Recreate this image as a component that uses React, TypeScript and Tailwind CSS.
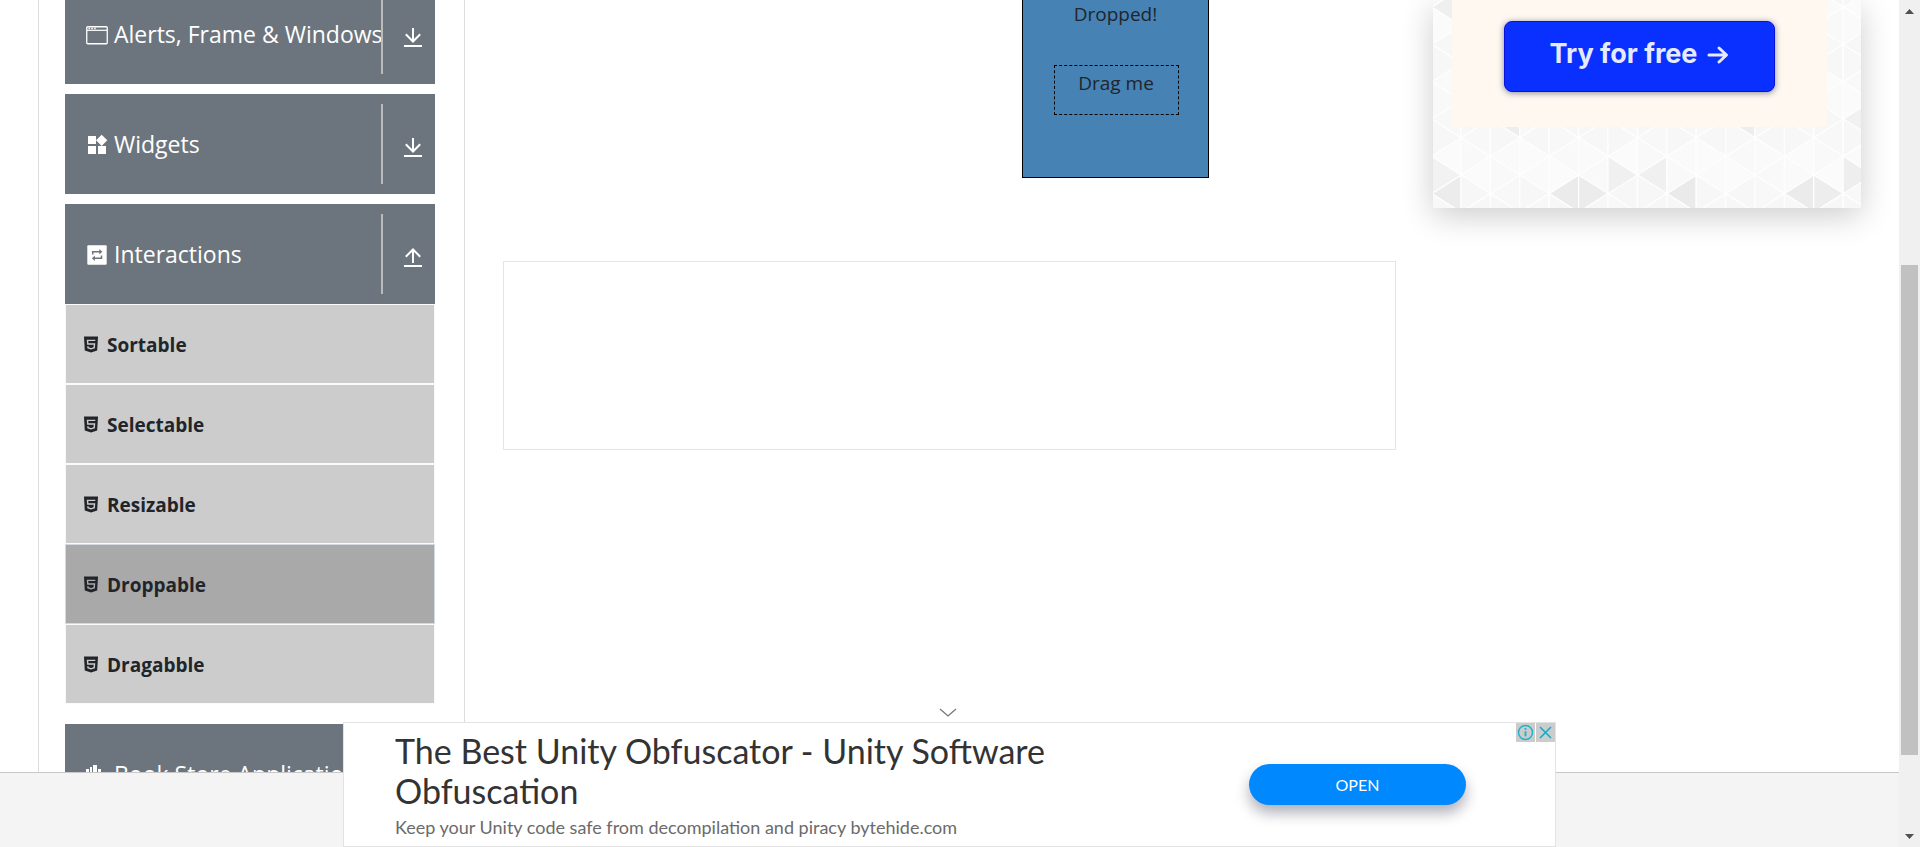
import type { ReactNode } from "react";
import { MdWidgets } from "react-icons/md";

const COL = 29.4;
const ROW = 37.3;

const SHADED: Record<string, string> = {
  "-1L193": "#ececec",
  "3L193": "#ebebeb",
  "4R193": "#ececec",
  "7L193": "#eaeaea",
  "11L193": "#ebebeb",
  "12R193": "#ededed",
  "-1R175": "#f2f2f2",
  "5R175": "#f0f0f0",
  "6L175": "#f0f0f0",
  "13R175": "#eeeeee",
  "1L119": "#eeeeee",
  "9L119": "#eeeeee",
  "13L119": "#f1f1f1",
  "-1L7": "#efefef",
};

const LIGHT = ["#f8f8f8", "#fafafa", "#f7f7f7", "#f9f9f9", "#f7f7f7", "#fbfbfb"];

const level = (y: number) => Math.floor(y + 0.2);

function TrianglePattern() {
  const shapes: ReactNode[] = [];
  for (let k = -1; k < 14; k++) {
    const x0 = 28 + COL * k;
    const x1 = x0 + COL;
    for (let m = -4; m < 3; m++) {
      const even = 137.7 + ROW * m;
      const odd = 156.3 + ROW * m;
      const isEven = k % 2 === 0;
      const left = isEven ? even : odd;
      const right = isEven ? odd : even;
      const h = ROW / 2;
      const seed = Math.abs(k * 7 + m * 5 + 60);
      const lKey = `${k}L${level(left)}`;
      const rKey = `${k}R${level(right)}`;
      shapes.push(
        <path
          key={lKey}
          d={`M${x0} ${left}L${x1} ${left - h}V${left + h}Z`}
          fill={SHADED[lKey] ?? LIGHT[seed % 6]}
        />,
        <path
          key={rKey}
          d={`M${x1} ${right}L${x0} ${right - h}V${right + h}Z`}
          fill={SHADED[rKey] ?? LIGHT[(seed + 3) % 6]}
        />,
      );
    }
  }
  return (
    <svg
      aria-hidden="true"
      viewBox="0 0 428 208"
      preserveAspectRatio="xMinYMin slice"
      className="absolute inset-0 h-full w-full"
    >
      <g stroke="#fefefe" strokeWidth="1.2">
        {shapes}
      </g>
    </svg>
  );
}

function ArrowIcon({ up = false }: { up?: boolean }) {
  return (
    <svg width="18" height="20" viewBox="0 0 18 20" fill="none" stroke="currentColor" strokeWidth="2" aria-hidden="true">
      {up ? <path d="M9 15V1.5M1.8 8.7L9 1.5l7.2 7.2" /> : <path d="M9 0v13.5M1.8 6.3L9 13.5l7.2-7.2" />}
      <path d="M0 18h18" />
    </svg>
  );
}

function WindowIcon() {
  return (
    <svg width="22" height="22" viewBox="0 0 22 22" fill="none" stroke="currentColor" aria-hidden="true">
      <rect x="0.75" y="2.75" width="20.5" height="17" rx="1" strokeWidth="1.3" />
      <path d="M1 6.3h20" strokeWidth="1.2" />
      <path d="M2.5 4.5h1.6M5.3 4.5h1.6M8.1 4.5h1.6" strokeWidth="1.5" />
    </svg>
  );
}

function SwapIcon() {
  return (
    <svg width="22" height="22" viewBox="0 0 22 22" aria-hidden="true">
      <rect x="1.3" y="1.3" width="19.400" height="19.400" rx="1" fill="#fff" />
      <g fill="none" stroke="#6c757d" strokeWidth="1.5">
        <path d="M6.700 10.500V7.700h7.800M15.500 11.500v2.800H7.700" />
      </g>
      <path d="M13.300 5l3 2.700-3 2.700ZM8.900 11.600l-3 2.700 3 2.700Z" fill="#6c757d" />
    </svg>
  );
}

function BarsIcon() {
  return (
    <svg width="22" height="22" viewBox="0 0 22 22" fill="currentColor" aria-hidden="true">
      <path d="M0 5h3v16H0zM4 3h2v18H4zM7 1h4v20H7zM12 5h3v16h-3z" />
    </svg>
  );
}

function Html5Icon({ cutout }: { cutout: string }) {
  return (
    <svg width="14" height="17" viewBox="0 0 14 17" className="shrink-0" aria-hidden="true">
      <path d="M0 .4h14l-.8 14L7 16.400.8 14.400Z" fill="#212529" />
      <path
        d="M11.300 4.400H3.500l.3 3.600h6.700l-.3 3.700L7 12.800l-3-1.100-.1-1.400"
        fill="none"
        stroke={cutout}
        strokeWidth="1.400"
      />
    </svg>
  );
}

function GroupHeader({ icon, label, open = false }: { icon: ReactNode; label: string; open?: boolean }) {
  return (
    <button
      type="button"
      aria-expanded={open}
      className="flex h-[100px] w-full items-stretch bg-[#6c757d] py-2.5 text-left text-white"
    >
      <span className="flex flex-1 items-center whitespace-nowrap pl-[21px] text-[23px] leading-8">
        <span className="mt-0.5 flex w-[22px] shrink-0 justify-center">{icon}</span>
        <span className="ml-1.5 w-0">{label}</span>
      </span>
      <span className="flex w-[54px] items-center justify-center border-l-2 border-[#bbb] pl-2 pt-2">
        <ArrowIcon up={open} />
      </span>
    </button>
  );
}

const ITEMS = ["Sortable", "Selectable", "Resizable", "Droppable", "Dragabble"];

function Sidebar() {
  return (
    <nav className="flex w-[427px] shrink-0 flex-col border-x border-[#dcdcdc] pl-[26px] pr-[29px]">
      <div className="-mt-4 flex flex-col gap-2.5">
        <GroupHeader icon={<WindowIcon />} label="Alerts, Frame & Windows" />
        <GroupHeader icon={<MdWidgets size={24} className="shrink-0" />} label="Widgets" />
        <GroupHeader icon={<SwapIcon />} label="Interactions" open />
      </div>
      <ul>
        {ITEMS.map((item) => {
          const active = item === "Droppable";
          return (
            <li key={item}>
              <a
                href={`#${item.toLowerCase()}`}
                className={
                  active
                    ? "flex h-20 items-center gap-[9px] border border-[#d3d9df] bg-[#a9a9a9] pl-[18px] text-[19px] font-bold text-[#212529]"
                    : "flex h-20 items-center gap-[9px] border border-[#f8f9fa] bg-[#ccc] pl-[18px] text-[19px] font-bold text-[#212529]"
                }
              >
                <Html5Icon cutout={active ? "#a9a9a9" : "#cccccc"} />
                <span className="pt-0.5">{item}</span>
              </a>
            </li>
          );
        })}
      </ul>
      <div className="mt-5">
        <GroupHeader icon={<BarsIcon />} label="Book Store Application" />
      </div>
    </nav>
  );
}

function DropArea() {
  return (
    <section className="ml-[38px] mr-[37px] min-w-0 flex-1">
      <div className="-mt-px ml-[519px] flex h-[179px] w-[187px] flex-col items-center border border-t-0 border-black bg-[#4682b4] text-[19px] leading-[30px] text-[#212529]">
        <p>Dropped!</p>
        <div className="ml-px mt-9 h-[50px] w-[125px] border border-dashed border-black pt-0.5 text-center">Drag me</div>
      </div>
      <div className="mt-[83px] h-[189px] border border-[#e5e5e5]" />
    </section>
  );
}

function SideAd() {
  return (
    <aside className="relative h-[208px] w-[428px] shrink-0 bg-[#fafafa] shadow-[0_8px_30px_rgba(0,0,0,0.2)]">
      <TrianglePattern />
      <div className="relative ml-[19px] mr-[34px] flex h-[127px] justify-center bg-[#fef8f1] pt-[21px]">
        <button
          type="button"
          className="flex h-[71px] w-[271px] items-center justify-center gap-2.5 rounded-lg border border-[#0a12d8] bg-[#0a30ff] pb-1 font-['Inter',sans-serif] text-[27px] font-bold text-[#e6eaff] shadow-[0_1px_6px_rgba(60,60,90,0.6)]"
        >
          Try for free
          <svg width="22" height="20" viewBox="0 0 22 20" fill="none" stroke="currentColor" strokeWidth="3" strokeLinejoin="round" strokeLinecap="round" aria-hidden="true">
            <path d="M2 10h17M12 3l7.500 7-7.500 7" />
          </svg>
        </button>
      </div>
    </aside>
  );
}

function BottomAd() {
  return (
    <aside className="fixed bottom-0 left-[343px] right-[364px] h-[125px] border border-[#e3e3e3] bg-white">
      <button type="button" aria-label="Collapse" className="absolute -top-[15px] left-[595px]">
        <svg width="18" height="10" viewBox="0 0 18 10" fill="none" stroke="#777" strokeWidth="1.3" aria-hidden="true">
          <path d="M1 1l8 7 8-7" />
        </svg>
      </button>
      <div className="flex h-full items-start">
        <div className="ml-[51px] mt-2 w-[720px] font-['Lato',sans-serif]">
          <h2 className="text-[34px] leading-10 text-[#333]">The Best Unity Obfuscator - Unity Software Obfuscation</h2>
          <p className="text-[18px] leading-8 text-[#6b6b6b]">
            Keep your Unity code safe from decompilation and piracy bytehide.com
          </p>
        </div>
        <a
          href="#open"
          className="ml-auto mr-[89px] mt-[41px] flex h-[41px] w-[217px] items-center justify-center rounded-full bg-[#0088ff] font-['Lato',sans-serif] text-base text-white shadow-[0_8px_14px_rgba(30,30,60,0.35)]"
        >
          OPEN
        </a>
      </div>
      <div className="absolute right-0 top-0 flex gap-px">
        <button type="button" aria-label="Ad information" className="flex h-[19px] w-[19px] items-center justify-center bg-[#ccc]">
          <svg width="17" height="17" viewBox="0 0 17 17" fill="none" stroke="#1fb3cc" strokeWidth="1.5" aria-hidden="true">
            <circle cx="8.500" cy="8.500" r="7" />
            <path d="M8.500 7.300v5M8.500 4v1.800" strokeWidth="1.900" />
          </svg>
        </button>
        <button type="button" aria-label="Close ad" className="flex h-[19px] w-[19px] items-center justify-center bg-[#ccc]">
          <svg width="13" height="13" viewBox="0 0 13 13" fill="none" stroke="#12acc8" strokeWidth="1.600" aria-hidden="true">
            <path d="M1 1l11 11M12 1L1 12" />
          </svg>
        </button>
      </div>
    </aside>
  );
}

function ScrollTrack() {
  return (
    <div aria-hidden="true" className="flex w-[21px] shrink-0 flex-col items-center bg-[#f0f0f0] py-2">
      <svg width="9" height="5" viewBox="0 0 9 5" className="mt-px" fill="#505050">
        <path d="M4.500 0L9 5H0Z" />
      </svg>
      <div className="mt-[251px] w-[17px] flex-1 bg-[#c1c1c1]" />
      <svg width="9" height="5" viewBox="0 0 9 5" className="mt-[79px]" fill="#505050">
        <path d="M4.500 5L9 0H0Z" />
      </svg>
    </div>
  );
}

export default function App() {
  return (
    <div className="flex h-screen bg-white font-['Open_Sans','Noto_Sans',sans-serif]">
      <div className="flex min-w-0 flex-1 flex-col">
        <main className="flex min-h-0 flex-1 overflow-hidden px-[38px]">
          <Sidebar />
          <DropArea />
          <SideAd />
        </main>
        <footer className="h-[75px] shrink-0 border-t border-[#c8c8c8] bg-[#f4f4f4]" />
      </div>
      <ScrollTrack />
      <BottomAd />
    </div>
  );
}
